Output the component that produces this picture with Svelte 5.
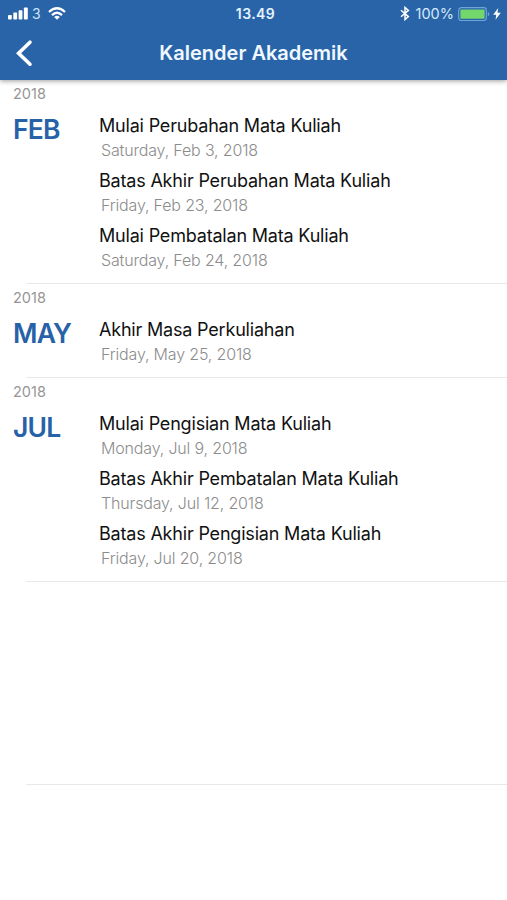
<script>
  const months = [
    {
      year: 2018,
      name: 'FEB',
      events: [
        { title: 'Mulai Perubahan Mata Kuliah', date: 'Saturday, Feb 3, 2018' },
        { title: 'Batas Akhir Perubahan Mata Kuliah', date: 'Friday, Feb 23, 2018' },
        { title: 'Mulai Pembatalan Mata Kuliah', date: 'Saturday, Feb 24, 2018' }
      ]
    },
    {
      year: 2018,
      name: 'MAY',
      events: [{ title: 'Akhir Masa Perkuliahan', date: 'Friday, May 25, 2018' }]
    },
    {
      year: 2018,
      name: 'JUL',
      events: [
        { title: 'Mulai Pengisian Mata Kuliah', date: 'Monday, Jul 9, 2018' },
        { title: 'Batas Akhir Pembatalan Mata Kuliah', date: 'Thursday, Jul 12, 2018' },
        { title: 'Batas Akhir Pengisian Mata Kuliah', date: 'Friday, Jul 20, 2018' }
      ]
    }
  ];
</script>

<div class="screen">
  <header>
    <div class="status">
      <div class="status-left">
        <svg class="signal" width="20" height="13" viewBox="0 0 20 13" fill="#fff">
          <rect x="0" y="8" width="3.8" height="4.6" rx="0.8" />
          <rect x="5.3" y="5.6" width="3.8" height="7" rx="0.8" />
          <rect x="10.6" y="3.2" width="3.8" height="9.4" rx="0.8" />
          <rect x="15.9" y="0.4" width="3.9" height="12.2" rx="0.8" />
        </svg>
        <span class="carrier">3</span>
        <svg class="wifi" width="18" height="13" viewBox="0 0 18 13" fill="none" stroke="#fff" stroke-width="2.3">
          <path d="M1 5 Q9 -2.4 17 5" />
          <path d="M4 8.2 Q9 3.4 14 8.2" />
          <path d="M6.2 9.9 Q9 7.7 11.8 9.9 L9 12.8 Z" fill="#fff" stroke="none" />
        </svg>
      </div>
      <span class="clock">13.49</span>
      <div class="status-right">
        <svg class="bluetooth" width="10" height="15" viewBox="0 0 10 15" fill="none" stroke="#fff" stroke-width="1.5">
          <path d="M1 4.2 L8.4 10.6 L5 13.6 V1.4 L8.4 4.4 L1 10.8" />
        </svg>
        <span class="percent">100%</span>
        <svg class="battery" width="32" height="14" viewBox="0 0 32 14">
          <rect x="0.7" y="0.7" width="27.6" height="12.8" rx="2.6" fill="none" stroke="#6fa5d8" stroke-width="1.2" />
          <rect x="2.4" y="2.4" width="24.2" height="9.4" rx="1" fill="#72d86c" />
          <path d="M29.8 5 Q31.4 5.4 31.4 7.1 Q31.4 8.8 29.8 9.2 Z" fill="#6fa5d8" />
        </svg>
        <svg class="bolt" width="8" height="12" viewBox="0 0 8 12" fill="#fff">
          <path d="M5.2 0 L0.2 6.8 H3.3 L2.5 11.8 L7.8 4.7 H4.5 Z" />
        </svg>
      </div>
    </div>
    <div class="navbar">
      <button class="back" aria-label="Back">
        <svg width="17" height="28" viewBox="0 0 17 28" fill="none" stroke="#fff" stroke-width="3.6" stroke-linecap="round">
          <path d="M14 3.2 L2.6 14.2 L14 25.2" />
        </svg>
      </button>
      <h1>Kalender Akademik</h1>
    </div>
  </header>

  <main>
    {#each months as month}
      <section>
        <div class="year">{month.year}</div>
        <div class="row">
          <h2>{month.name}</h2>
          <ul>
            {#each month.events as event}
              <li>
                <p class="title">{event.title}</p>
                <p class="date">{event.date}</p>
              </li>
            {/each}
          </ul>
        </div>
        <hr />
      </section>
    {/each}
    <section class="empty"><hr /></section>
  </main>
</div>

<style>
  :global(body) {
    background: #fff;
  }

  .screen {
    height: 900px;
    overflow: hidden;
    background: #fff;
    font-family: Inter, 'Liberation Sans', sans-serif;
  }

  header {
    position: relative;
    height: 80px;
    background: #2a64a8;
    color: #fff;
    box-shadow: 0 1px 5px rgba(0, 0, 0, 0.4);
  }

  .status {
    display: grid;
    grid-template-columns: 1fr auto 1fr;
    align-items: center;
    height: 27px;
    padding: 0 6px 0 8px;
  }

  .status-left,
  .status-right {
    display: flex;
    align-items: center;
  }

  .status-right {
    justify-content: flex-end;
  }

  .carrier {
    margin: 0 7px 0 4px;
    font-size: 14px;
    color: #c9e3fb;
  }

  .clock {
    padding-left: 2px;
    font-size: 14px;
    font-weight: 600;
    letter-spacing: 0.4px;
    color: #e4f4ff;
  }

  .percent {
    margin: 0 4px 0 6px;
    font-size: 14.5px;
    color: #d3e9fc;
  }

  .bolt {
    margin-left: 3px;
  }

  .navbar {
    display: grid;
    grid-template-columns: 50px 1fr 50px;
    align-items: center;
    height: 51px;
  }

  .back {
    display: flex;
    padding: 0 0 0 16px;
    border: 0;
    background: none;
  }

  h1 {
    margin: 0;
    font-size: 20px;
    font-weight: 600;
    text-align: center;
    color: #f0f9ff;
  }

  .year {
    padding-left: 13px;
    height: 33px;
    font-size: 14.5px;
    line-height: 28px;
    color: #969696;
  }

  .row {
    display: grid;
    grid-template-columns: 86px 1fr;
    padding: 0 0 5px 13px;
  }

  h2 {
    margin: 0;
    font-size: 26.5px;
    font-weight: 600;
    line-height: 32px;
    letter-spacing: -0.8px;
    color: #2762a8;
  }

  ul {
    margin: 0;
    padding: 0;
    list-style: none;
  }

  li {
    height: 55px;
  }

  p {
    margin: 0;
    line-height: 25px;
    white-space: nowrap;
  }

  .title {
    font-size: 18px;
    letter-spacing: -0.19px;
    color: #111;
  }

  .date {
    padding-left: 2px;
    font-size: 16px;
    font-weight: 300;
    letter-spacing: -0.16px;
    color: #8c8c8c;
  }

  hr {
    height: 1px;
    margin: 0 0 0 26px;
    border: 0;
    background: #e8e8e8;
  }

  .empty {
    padding-top: 202px;
  }
</style>
